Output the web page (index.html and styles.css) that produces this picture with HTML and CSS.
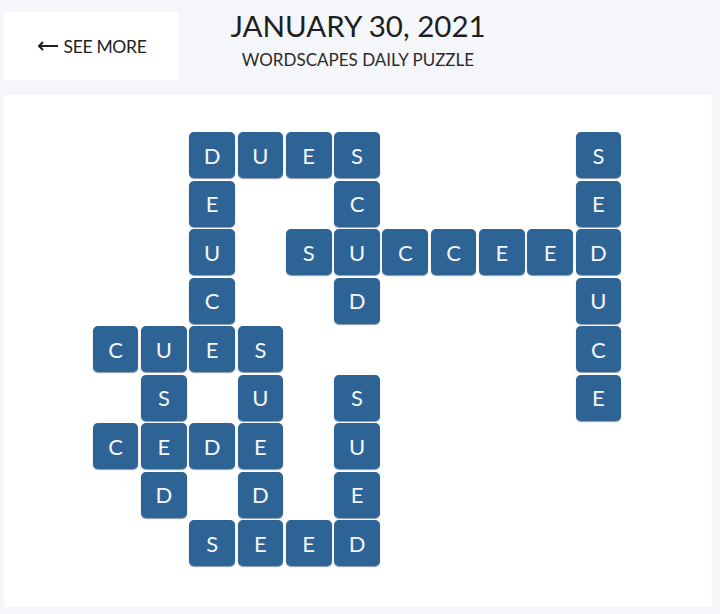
FILE: index.html
```html
<!DOCTYPE html>
<html>
<head>
<meta charset="utf-8">
<link rel="stylesheet" href="styles.css">
</head>
<body>
<div class="page">
  <header class="top">
    <a class="back" href="#"><svg class="arrow" width="22" height="10" viewBox="0 0 22 10"><path d="M21 5H2M6 1L2 5L6 9" fill="none" stroke="#1e1e1e" stroke-width="2"/></svg>SEE MORE</a>
    <div class="titles">
      <h1 class="title">JANUARY 30, 2021</h1>
      <div class="subtitle">WORDSCAPES DAILY PUZZLE</div>
    </div>
  </header>
  <main class="panel">
    <div class="board">
      <div class="t r0 c2">D</div><div class="t r0 c3">U</div><div class="t r0 c4">E</div><div class="t r0 c5">S</div><div class="t r0 c10">S</div>
      <div class="t r1 c2">E</div><div class="t r1 c5">C</div><div class="t r1 c10">E</div>
      <div class="t r2 c2">U</div><div class="t r2 c4">S</div><div class="t r2 c5">U</div><div class="t r2 c6">C</div><div class="t r2 c7">C</div><div class="t r2 c8">E</div><div class="t r2 c9">E</div><div class="t r2 c10">D</div>
      <div class="t r3 c2">C</div><div class="t r3 c5">D</div><div class="t r3 c10">U</div>
      <div class="t r4 c0">C</div><div class="t r4 c1">U</div><div class="t r4 c2">E</div><div class="t r4 c3">S</div><div class="t r4 c10">C</div>
      <div class="t r5 c1">S</div><div class="t r5 c3">U</div><div class="t r5 c5">S</div><div class="t r5 c10">E</div>
      <div class="t r6 c0">C</div><div class="t r6 c1">E</div><div class="t r6 c2">D</div><div class="t r6 c3">E</div><div class="t r6 c5">U</div>
      <div class="t r7 c1">D</div><div class="t r7 c3">D</div><div class="t r7 c5">E</div>
      <div class="t r8 c2">S</div><div class="t r8 c3">E</div><div class="t r8 c4">E</div><div class="t r8 c5">D</div>
    </div>
  </main>
</div>
</body>
</html>
```
FILE: styles.css
```css
* { box-sizing: border-box; }
html, body {
  margin: 0;
  padding: 0;
  background: #f4f6fa;
  font-family: Lato, "Open Sans", sans-serif;
}
.page {
  width: 720px;
  height: 614px;
  padding: 12px 8px 0 4px;
}
.top {
  position: relative;
  height: 68px;
  display: flex;
  justify-content: center;
}
.back {
  position: absolute;
  left: 0;
  top: 0;
  width: 174px;
  height: 68px;
  background: #ffffff;
  display: flex;
  align-items: center;
  justify-content: center;
  color: #222;
  text-decoration: none;
  font-size: 17.5px;
  letter-spacing: -0.3px;
  padding-left: 2px;
}
.arrow {
  margin-right: 4px;
}
.titles {
  text-align: center;
}
.title {
  margin: -3px 0 0;
  font-weight: 400;
  font-size: 29.5px;
  line-height: 34px;
  color: #1e1e1e;
}
.subtitle {
  margin-top: 7px;
  font-size: 17px;
  line-height: 20px;
  color: #2a2a2a;
}
.panel {
  margin-top: 15px;
  background: #ffffff;
  height: 512px;
  width: 708px;
  display: flex;
  justify-content: center;
  padding-top: 37px;
}
.board {
  display: grid;
  grid-template-columns: repeat(11, 45.6px);
  grid-template-rows: repeat(9, 46px);
  column-gap: 2.7px;
  row-gap: 2.5px;
  margin-left: -2px;
}
.t {
  background: #2e6396;
  border-radius: 5px;
  box-shadow: 0 1px 1px rgba(20, 50, 90, 0.5);
  color: #f4f7fb;
  font-size: 22px;
  display: flex;
  align-items: center;
  justify-content: center;
}
.r0 { grid-row: 1; } .r1 { grid-row: 2; } .r2 { grid-row: 3; }
.r3 { grid-row: 4; } .r4 { grid-row: 5; } .r5 { grid-row: 6; }
.r6 { grid-row: 7; } .r7 { grid-row: 8; } .r8 { grid-row: 9; }
.c0 { grid-column: 1; } .c1 { grid-column: 2; } .c2 { grid-column: 3; }
.c3 { grid-column: 4; } .c4 { grid-column: 5; } .c5 { grid-column: 6; }
.c6 { grid-column: 7; } .c7 { grid-column: 8; } .c8 { grid-column: 9; }
.c9 { grid-column: 10; } .c10 { grid-column: 11; }
```
